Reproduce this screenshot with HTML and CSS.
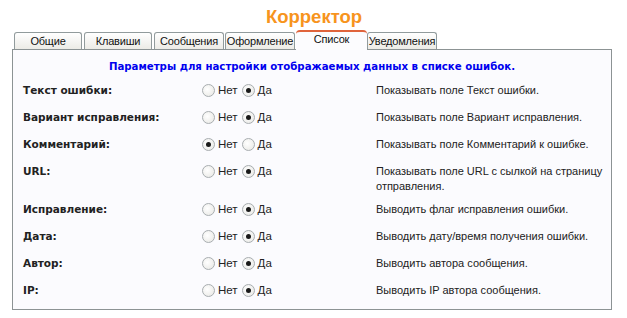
FILE: index.html
```html
<!DOCTYPE html>
<html lang="ru">
<head>
  <meta charset="UTF-8">
  <title>Корректор</title>
  <link rel="stylesheet" href="styles.css">
</head>
<body>
  <div id="page">
    <h1 class="title">Корректор</h1>

    <!-- Tabs -->
    <div class="tabs">
      <span class="tab">Общие</span>
      <span class="tab">Клавиши</span>
      <span class="tab">Сообщения</span>
      <span class="tab">Оформление</span>
      <span class="tab active">Список</span>
      <span class="tab">Уведомления</span>
    </div>

    <div class="panel">
      <p class="caption">Параметры для настройки отображаемых данных в списке ошибок.</p>

      <div class="grid">
        <div class="label">Текст ошибки:</div>
        <div class="choice"><input type="radio" name="r1"> Нет <input type="radio" name="r1" checked> Да</div>
        <div class="desc">Показывать поле Текст ошибки.</div>

        <div class="label">Вариант исправления:</div>
        <div class="choice"><input type="radio" name="r2"> Нет <input type="radio" name="r2" checked> Да</div>
        <div class="desc">Показывать поле Вариант исправления.</div>

        <div class="label">Комментарий:</div>
        <div class="choice"><input type="radio" name="r3" checked> Нет <input type="radio" name="r3"> Да</div>
        <div class="desc">Показывать поле Комментарий к ошибке.</div>

        <div class="label">URL:</div>
        <div class="choice"><input type="radio" name="r4"> Нет <input type="radio" name="r4" checked> Да</div>
        <div class="desc">Показывать поле URL с сылкой на страницу отправления.</div>

        <div class="label">Исправление:</div>
        <div class="choice"><input type="radio" name="r5"> Нет <input type="radio" name="r5" checked> Да</div>
        <div class="desc">Выводить флаг исправления ошибки.</div>

        <div class="label">Дата:</div>
        <div class="choice"><input type="radio" name="r6"> Нет <input type="radio" name="r6" checked> Да</div>
        <div class="desc">Выводить дату/время получения ошибки.</div>

        <div class="label">Автор:</div>
        <div class="choice"><input type="radio" name="r7"> Нет <input type="radio" name="r7" checked> Да</div>
        <div class="desc">Выводить автора сообщения.</div>

        <div class="label">IP:</div>
        <div class="choice"><input type="radio" name="r8"> Нет <input type="radio" name="r8" checked> Да</div>
        <div class="desc">Выводить IP автора сообщения.</div>
      </div>
    </div>
  </div>
</body>
</html>
```

FILE: styles.css
```css
body {
  margin: 0;
  background: #fff;
  font-family: "DejaVu Sans", Verdana, sans-serif;
  font-size: 11px;
  color: #222;
}
#page {
  padding: 6px 15px 0 12px;
}
.title {
  margin: 0;
  text-align: center;
  font-family: "Liberation Sans", Arial, sans-serif;
  font-size: 18.5px;
  font-weight: bold;
  color: #f7941d;
  line-height: 22px;
  padding-left: 4px;
}
/* Tab strip */
.tabs {
  display: flex;
  align-items: flex-end;
  padding-left: 2px;
  height: 20px;
  margin-top: 1px;
}
.tab {
  font-family: "Liberation Sans", Arial, sans-serif;
  font-size: 11px;
  letter-spacing: -0.2px;
  height: 16px;
  line-height: 17px;
  border: 1px solid #919b9c;
  border-bottom: none;
  border-radius: 3px 3px 0 0;
  background: linear-gradient(#ffffff, #ecebe6);
  text-align: center;
  color: #111;
  margin-right: 2px;
  width: 66px;
  white-space: nowrap;
  overflow: hidden;
}
.tab:nth-child(3),
.tab:nth-child(4) { width: 68px; margin-right: 1px; }
.tab.active {
  width: 71px;
  height: 18px;
  line-height: 14px;
  background: #fcfcfe;
  border: none;
  border-top: 2px solid #e0643c;
  border-radius: 4px 4px 0 0;
  margin-right: 0;
  position: relative;
  top: 1px;
}
.tab:last-child { width: 68px; }

.panel {
  border: 1px solid #8c9394;
  background: #fbfbfe;
  height: 259px;
  width: 598px;
}
.caption {
  margin: 11px 0 0 0;
  text-align: center;
  font-weight: bold;
  font-size: 10.2px;
  color: #0000ee;
}
.grid {
  display: grid;
  grid-template-columns: 177px 176px 1fr;
  grid-auto-rows: minmax(27px, auto);
  padding-left: 10px;
  margin-top: 5px;
}
.grid > div {
  display: flex;
  align-items: flex-start;
  padding-top: 7px;
  line-height: 13px;
}
.label {
  font-weight: bold;
  font-size: 10.5px;
  color: #222;
}
.choice {
  font-family: "Liberation Sans", Arial, sans-serif;
  font-size: 11.5px;
  color: #222;
  gap: 2px;
}
.desc {
  font-family: "Liberation Sans", Arial, sans-serif;
  font-size: 11px;
  color: #222;
}
.grid > .desc:nth-child(12) {
  line-height: 15px;
  padding-top: 6px;
  padding-bottom: 2px;
}
input[type="radio"] {
  appearance: none;
  width: 13px;
  height: 13px;
  margin: 0 1px 0 2px;
  border: 1px solid #a8adb0;
  border-radius: 50%;
  background: radial-gradient(circle at 40% 40%, #ffffff, #e6e6e2);
  box-sizing: border-box;
  position: relative;
  flex-shrink: 0;
}
input[type="radio"]:checked::after {
  content: "";
  position: absolute;
  left: 3px;
  top: 3px;
  width: 5px;
  height: 5px;
  border-radius: 50%;
  background: #1a1a1a;
}
```
